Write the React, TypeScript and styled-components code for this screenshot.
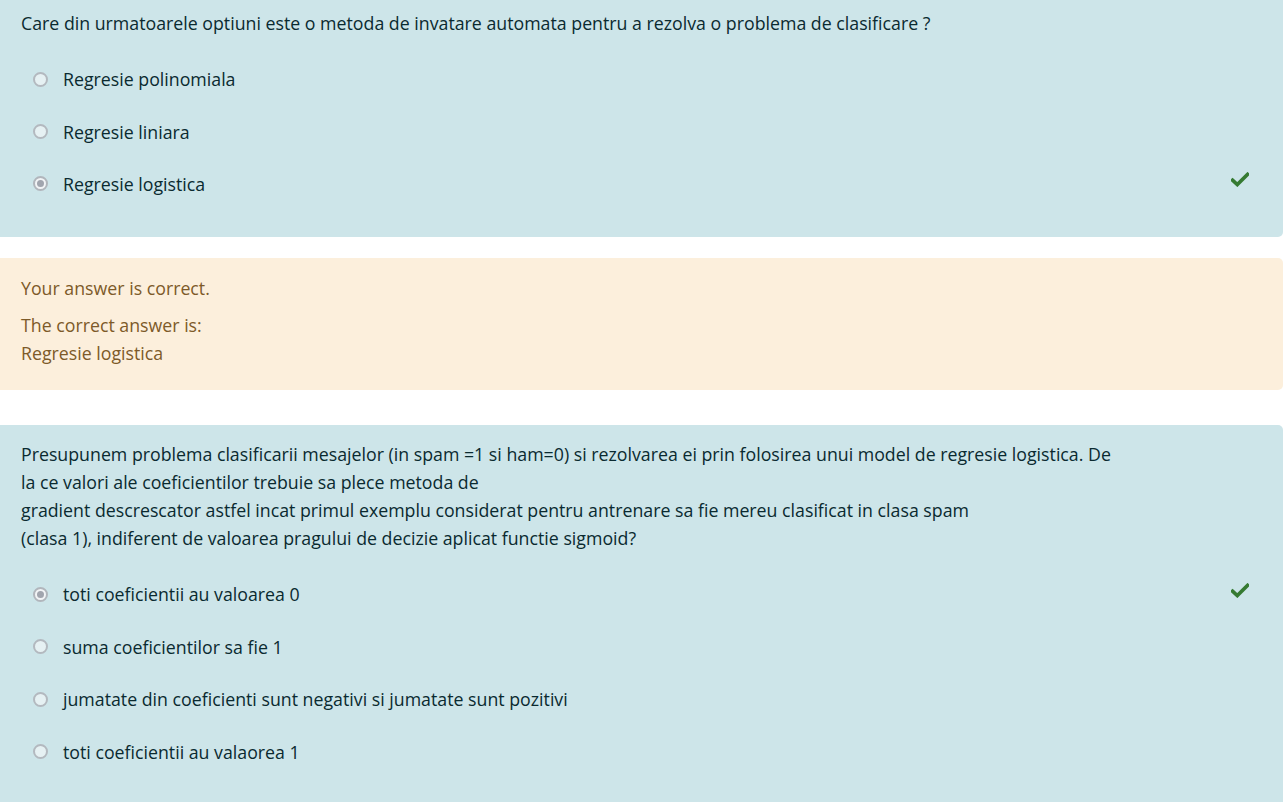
import React from "react";
import styled, { createGlobalStyle } from "styled-components";

const Global = createGlobalStyle`
  html, body { margin: 0; padding: 0; background: #ffffff; }
  body { font-family: "Open Sans", "Noto Sans", sans-serif; }
`;

const Page = styled.div`
  width: 1283px;
  margin-top: -6px;
  display: flex;
  flex-direction: column;
`;

const Formulation = styled.div<{ $round: string }>`
  background: #cde5e9;
  color: #0a2a30;
  padding: 15px 34px 27px 21px;
  border-radius: ${(p) => p.$round};
  font-size: 17.75px;
  line-height: 28px;
`;

const Outcome = styled.div`
  background: #fcefdc;
  color: #7d5a29;
  margin-top: 21px;
  padding: 16px 21px 23px;
  border-radius: 0 5px 5px 0;
  font-size: 17.75px;
  line-height: 28px;
`;

const Para = styled.p<{ $gap?: number }>`
  margin: 0;
  margin-top: ${(p) => p.$gap ?? 0}px;
`;

const Gap = styled.div`
  height: 35px;
`;

const Answers = styled.div`
  margin-top: 16px;
  display: flex;
  flex-direction: column;
`;

const Option = styled.div`
  height: 52.4px;
  display: flex;
  align-items: center;
  padding-left: 12px;
`;

const Radio = styled.span<{ $checked?: boolean }>`
  box-sizing: border-box;
  width: 15px;
  height: 15px;
  border-radius: 50%;
  border: 2px solid ${(p) => (p.$checked ? "#b1b6bc" : "#b3b9bf")};
  background: ${(p) => (p.$checked ? "#f2f4f6" : "#e6f1f3")};
  display: flex;
  align-items: center;
  justify-content: center;
  flex-shrink: 0;
`;

const Dot = styled.span`
  width: 7px;
  height: 7px;
  border-radius: 50%;
  background: #a1a5ae;
`;

const Label = styled.span`
  margin-left: 15px;
  flex: 1;
`;

const Check = styled.svg`
  width: 18px;
  height: 15px;
  margin-bottom: 8px;
  flex-shrink: 0;
`;

const CheckIcon = () => (
  <Check viewBox="0 0 18 15">
    <path d="M1.5 8.2 L6.3 12.6 L16.5 2.4" fill="none" stroke="#357a32" strokeWidth="3.6" strokeLinecap="square" />
  </Check>
);

type Opt = { text: string; checked?: boolean };

const AnswerList = ({ opts }: { opts: Opt[] }) => (
  <Answers>
    {opts.map((o) => (
      <Option key={o.text}>
        <Radio $checked={o.checked}>{o.checked && <Dot />}</Radio>
        <Label>{o.text}</Label>
        {o.checked && <CheckIcon />}
      </Option>
    ))}
  </Answers>
);

export default function App() {
  return (
    <>
      <Global />
      <Page>
        <Formulation $round="0 0 5px 0">
          <Para>Care din urmatoarele optiuni este o metoda de invatare automata pentru a rezolva o problema de clasificare ?</Para>
          <AnswerList
            opts={[
              { text: "Regresie polinomiala" },
              { text: "Regresie liniara" },
              { text: "Regresie logistica", checked: true },
            ]}
          />
        </Formulation>
        <Outcome>
          <Para>Your answer is correct.</Para>
          <Para $gap={9}>
            The correct answer is:
            <br />
            Regresie logistica
          </Para>
        </Outcome>
        <Gap />
        <Formulation $round="0 5px 0 0">
          <Para>
            Presupunem problema clasificarii mesajelor (in spam =1 si ham=0) si rezolvarea ei prin folosirea unui model de regresie logistica. De
            <br />
            la ce valori ale coeficientilor trebuie sa plece metoda de
            <br />
            gradient descrescator astfel incat primul exemplu considerat pentru antrenare sa fie mereu clasificat in clasa spam
            <br />
            (clasa 1), indiferent de valoarea pragului de decizie aplicat functie sigmoid?
          </Para>
          <AnswerList
            opts={[
              { text: "toti coeficientii au valoarea 0", checked: true },
              { text: "suma coeficientilor sa fie 1" },
              { text: "jumatate din coeficienti sunt negativi si jumatate sunt pozitivi" },
              { text: "toti coeficientii au valaorea 1" },
            ]}
          />
        </Formulation>
      </Page>
    </>
  );
}
